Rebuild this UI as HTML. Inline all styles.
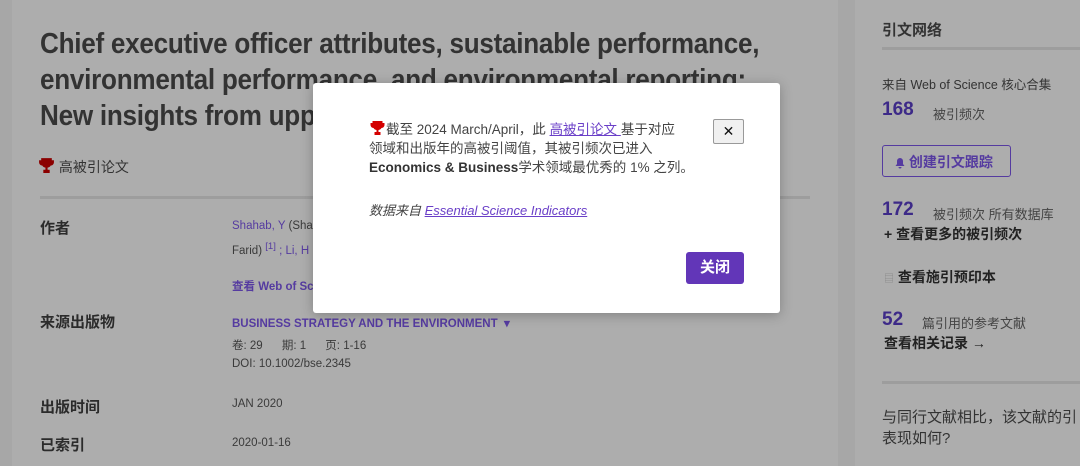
<!DOCTYPE html>
<html><head><meta charset="utf-8"><style>
*{margin:0;padding:0;box-sizing:border-box}
body{width:1080px;height:466px;overflow:hidden;background:#a7a7a7;font-family:"Liberation Sans","Noto Sans CJK SC",sans-serif;position:relative;color:#2e2e2e}
.a{position:absolute;white-space:nowrap}
.left{position:absolute;left:12px;top:0;width:826px;height:466px;background:#adadad}
.right{position:absolute;left:855px;top:0;width:225px;height:466px;background:#adadad}
.title{left:40px;top:26px;font-weight:bold;font-size:29px;line-height:36px;color:#333;transform:scaleX(0.9);transform-origin:0 0;letter-spacing:-0.3px}
.lbl{font-size:15px;font-weight:bold;color:#2b2b2b}
.sm{font-size:11.5px;color:#3a3a3a}
.p{color:#553ba0}
.modal{position:absolute;left:313px;top:83px;width:467px;height:230px;background:#fff;border-radius:3px;box-shadow:0 2px 12px rgba(0,0,0,.25)}
svg{vertical-align:-2px}
</style></head><body>
<div class="left"></div>
<div class="right"></div>
<div class="a title">Chief executive officer attributes, sustainable performance,<br>environmental performance, and environmental reporting:<br>New insights from upper echelons perspective</div>
<div class="a" style="left:38px;top:157px;font-size:14px;color:#333"><svg width="17" height="17" viewBox="0 0 16 16"><path d="M3 1h10v2h2v2a3 3 0 0 1-3 3 4 4 0 0 1-3 2v2h2v3H5v-3h2v-2a4 4 0 0 1-3-2 3 3 0 0 1-3-3V3h2z" fill="#8b0000"/></svg> 高被引论文</div>
<div class="a" style="left:40px;top:196px;width:770px;height:3px;background:#9d9d9d"></div>
<div class="a lbl" style="left:40px;top:217px">作者</div>
<div class="a sm" style="left:232px;top:220px"><span class="p">Shahab, Y</span> (Shah</div>
<div class="a sm" style="left:232px;top:241px">Farid) <span class="p"><sup>[1]</sup> ; Li, H</span></div>
<div class="a sm p" style="left:232px;top:278px;font-weight:bold">查看 Web of Sci</div>
<div class="a lbl" style="left:40px;top:311px">来源出版物</div>
<div class="a sm p" style="left:232px;top:316px;font-weight:bold">BUSINESS STRATEGY AND THE ENVIRONMENT &nbsp;▾</div>
<div class="a sm" style="left:232px;top:337px">卷: 29 &nbsp;&nbsp;&nbsp;&nbsp; 期: 1 &nbsp;&nbsp;&nbsp;&nbsp; 页: 1-16</div>
<div class="a sm" style="left:232px;top:358px">DOI: 10.1002/bse.2345</div>
<div class="a lbl" style="left:40px;top:396px">出版时间</div>
<div class="a sm" style="left:232px;top:398px">JAN 2020</div>
<div class="a lbl" style="left:40px;top:434px">已索引</div>
<div class="a sm" style="left:232px;top:437px">2020-01-16</div>

<div class="a" style="left:882px;top:19px;font-size:15px;font-weight:bold;color:#333">引文网络</div>
<div class="a" style="left:882px;top:47px;width:198px;height:3px;background:#9d9d9d"></div>
<div class="a" style="left:882px;top:74px;font-size:12.5px;color:#333">来自 Web of Science 核心合集</div>
<div class="a" style="left:882px;top:99px;font-size:19px;font-weight:bold;color:#3d2a88">168</div>
<div class="a" style="left:933px;top:104px;font-size:13px;color:#444">被引频次</div>
<div class="a" style="left:882px;top:145px;width:129px;height:32px;border:1px solid #553ba0;border-radius:3px;font-size:14px;color:#553ba0;padding:6px 0 0 12px;font-weight:bold"><svg width="10" height="12" viewBox="0 0 10 12"><path d="M5 1a3 3 0 0 1 3 3v3l1.5 2h-9L2 7V4a3 3 0 0 1 3-3z M3.5 10h3a1.5 1.5 0 0 1-3 0z" fill="#553ba0"/></svg> 创建引文跟踪</div>
<div class="a" style="left:882px;top:199px;font-size:19px;font-weight:bold;color:#3d2a88">172</div>
<div class="a" style="left:933px;top:204px;font-size:13px;color:#444">被引频次 所有数据库</div>
<div class="a" style="left:884px;top:224px;font-size:14px;font-weight:bold;color:#222">+ 查看更多的被引频次</div>
<div class="a" style="left:884px;top:267px;font-size:14px;font-weight:bold;color:#222"><span style="color:#888;font-weight:normal;font-size:10px">▤</span> 查看施引预印本</div>
<div class="a" style="left:882px;top:309px;font-size:19px;font-weight:bold;color:#3d2a88">52</div>
<div class="a" style="left:922px;top:313px;font-size:13px;color:#444">篇引用的参考文献</div>
<div class="a" style="left:884px;top:333px;font-size:14px;font-weight:bold;color:#222">查看相关记录 →</div>
<div class="a" style="left:882px;top:381px;width:198px;height:3px;background:#9d9d9d"></div>
<div class="a" style="left:882px;top:407px;font-size:15px;color:#333;line-height:21px">与同行文献相比，该文献的引<br>表现如何?</div>

<div class="modal">
<div class="a" style="left:56px;top:37px;font-size:13.5px;line-height:19px;color:#444"><svg width="17" height="16" viewBox="0 0 16 16"><path d="M3 1h10v2h2v2a3 3 0 0 1-3 3 4 4 0 0 1-3 2v2h2v3H5v-3h2v-2a4 4 0 0 1-3-2 3 3 0 0 1-3-3V3h2z" fill="#d40000"/></svg>截至 2024 March/April，此 <u style="color:#6a3fc8">高被引论文 </u>基于对应<br>领域和出版年的高被引阈值，其被引频次已进入<br><b style="color:#333">Economics &amp; Business</b>学术领域最优秀的 1% 之列。</div>
<div class="a" style="left:56px;top:117px;font-size:13px;font-style:italic;color:#444">数据来自 <u style="color:#6a3fc8">Essential Science Indicators</u></div>
<div class="a" style="left:400px;top:36px;width:31px;height:25px;border:1px solid #999;border-radius:2px;background:#f0f0f0;font-size:14px;text-align:center;line-height:22px;color:#111">✕</div>
<div class="a" style="left:373px;top:169px;width:58px;height:32px;background:#6236b8;border-radius:3px;color:#fff;font-size:15px;font-weight:bold;text-align:center;line-height:32px">关闭</div>
</div>
</body></html>
